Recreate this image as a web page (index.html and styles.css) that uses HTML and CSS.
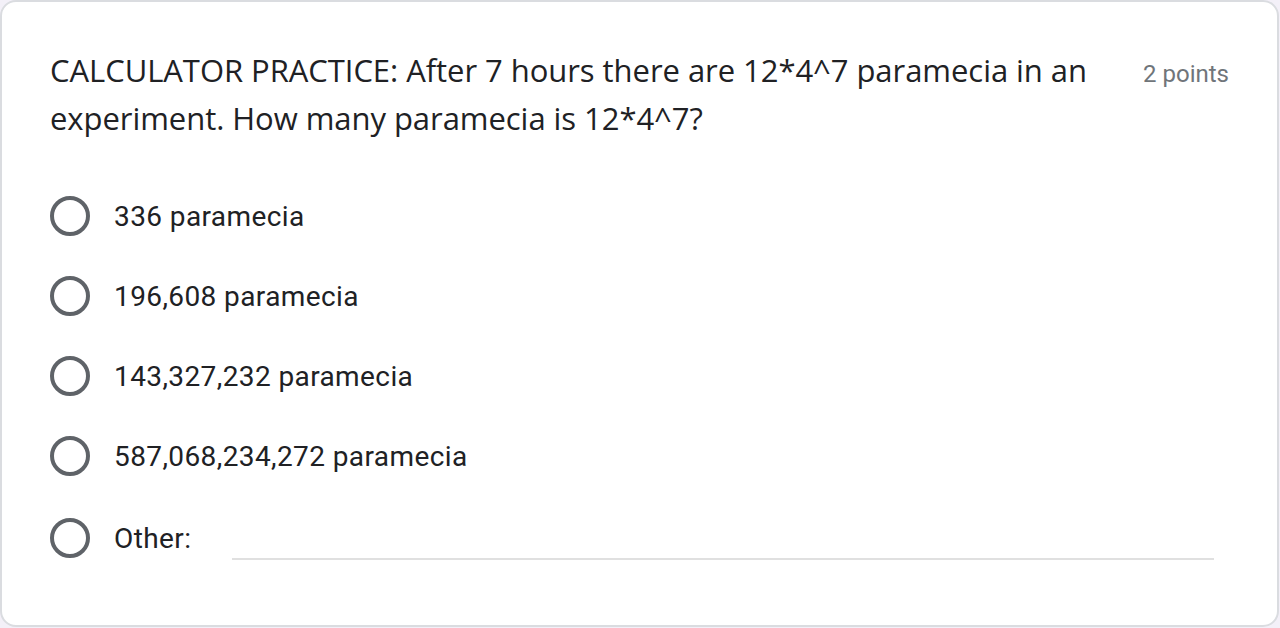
FILE: index.html
```html
<!DOCTYPE html>
<html>
<head>
<meta charset="utf-8">
<link rel="stylesheet" href="styles.css">
</head>
<body>
<div class="card">
  <div class="header">
    <div class="question">CALCULATOR PRACTICE: After 7 hours there are 12*4^7 paramecia in an experiment. How many paramecia is 12*4^7?</div>
    <div class="points">2 points</div>
  </div>
  <div class="options">
    <div class="option"><span class="radio"></span><span class="label">336 paramecia</span></div>
    <div class="option"><span class="radio"></span><span class="label">196,608 paramecia</span></div>
    <div class="option"><span class="radio"></span><span class="label">143,327,232 paramecia</span></div>
    <div class="option"><span class="radio"></span><span class="label">587,068,234,272 paramecia</span></div>
    <div class="option other"><span class="radio"></span><span class="label">Other:</span><span class="input"></span></div>
  </div>
</div>
</body>
</html>
```
FILE: styles.css
```css
html, body {
  margin: 0;
  padding: 0;
  background: #f3f0f8;
}
.card {
  box-sizing: border-box;
  width: 1279px;
  height: 627px;
  background: #ffffff;
  border: 2px solid #dadce0;
  border-radius: 16px;
  padding: 44px 48px 0 48px;
}
.header {
  display: flex;
  align-items: flex-start;
}
.question {
  flex: 1;
  font-family: "Open Sans", sans-serif;
  font-size: 31px;
  line-height: 48px;
  color: #202124;
  letter-spacing: -0.05px;
}
.points {
  margin-left: 48px;
  font-family: Roboto, sans-serif;
  font-size: 24px;
  color: #70757a;
  white-space: nowrap;
  padding-top: 7px;
  line-height: 42px;
}
.options {
  margin-top: 34px;
  display: flex;
  flex-direction: column;
}
.option {
  display: flex;
  align-items: center;
  height: 80px;
  font-family: Roboto, sans-serif;
  font-size: 28px;
  letter-spacing: 0.4px;
  color: #202124;
}
.option.other {
  height: 84px;
}
.radio {
  box-sizing: border-box;
  width: 40px;
  height: 40px;
  border: 4px solid #5f6368;
  border-radius: 50%;
  margin-right: 24px;
  flex: none;
}
.input {
  flex: 1;
  align-self: stretch;
  margin-left: 41px;
  margin-right: 15px;
  border-bottom: 2px solid #e0e0e0;
  margin-bottom: 20px;
}
```
